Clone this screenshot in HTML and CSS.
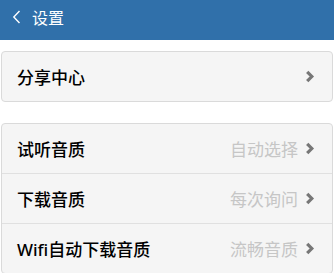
FILE: index.html
```html
<!DOCTYPE html>
<html lang="zh">
<head>
<meta charset="utf-8">
<link rel="stylesheet" href="styles.css">
</head>
<body>
<header class="topbar">
  <span class="back"><svg width="9" height="14" viewBox="0 0 9 14"><path d="M7.5 1 L1.8 7 L7.5 13" fill="none" stroke="#ffffff" stroke-width="1.4"/></svg></span>
  <span class="title">设置</span>
</header>
<main class="content">
  <section class="group">
    <div class="row">
      <span class="label">分享中心</span>
      <span class="chev"><svg width="10" height="13" viewBox="0 0 10 13"><path d="M2.2 1.8 L6.8 6.5 L2.2 11.2" fill="none" stroke="#777777" stroke-width="3.2"/></svg></span>
    </div>
  </section>
  <section class="group">
    <div class="row">
      <span class="label">试听音质</span>
      <span class="value">自动选择</span>
      <span class="chev"><svg width="10" height="13" viewBox="0 0 10 13"><path d="M2.2 1.8 L6.8 6.5 L2.2 11.2" fill="none" stroke="#777777" stroke-width="3.2"/></svg></span>
    </div>
    <div class="row">
      <span class="label">下载音质</span>
      <span class="value">每次询问</span>
      <span class="chev"><svg width="10" height="13" viewBox="0 0 10 13"><path d="M2.2 1.8 L6.8 6.5 L2.2 11.2" fill="none" stroke="#777777" stroke-width="3.2"/></svg></span>
    </div>
    <div class="row">
      <span class="label">Wifi自动下载音质</span>
      <span class="value">流畅音质</span>
      <span class="chev"><svg width="10" height="13" viewBox="0 0 10 13"><path d="M2.2 1.8 L6.8 6.5 L2.2 11.2" fill="none" stroke="#777777" stroke-width="3.2"/></svg></span>
    </div>
  </section>
</main>
</body>
</html>
```

FILE: styles.css
```css
html, body {
  margin: 0;
  padding: 0;
  background: #ffffff;
  font-family: "Liberation Sans", "Noto Sans CJK SC", sans-serif;
}
.topbar {
  height: 40px;
  background: #3070aa;
  color: #ffffff;
  display: flex;
  align-items: center;
  padding: 0 0 6px 12px;
  box-sizing: border-box;
  font-size: 16px;
}
.back {
  display: flex;
  align-items: center;
  margin-right: 11px;
}
.title {
  font-family: "Noto Sans CJK SC", sans-serif;
}
.content {
  padding: 11px 1px 0 1px;
  display: flex;
  flex-direction: column;
  gap: 21px;
}
.group {
  background: #f5f5f5;
  border: 1px solid #dadada;
  border-radius: 4px;
}
.row {
  height: 49px;
  display: flex;
  align-items: center;
  padding: 0 17px 0 15px;
  border-top: 1px solid #e0e0e0;
}
.row:first-child {
  border-top: none;
}
.label {
  flex: 1;
  font-size: 17px;
  font-weight: 500;
  color: #000000;
  font-family: "Noto Sans", "Noto Sans CJK SC", sans-serif;
}
.value {
  font-size: 17px;
  color: #c6c6c6;
  margin-right: 7px;
  font-family: "Noto Sans CJK SC", sans-serif;
}
.chev {
  display: flex;
  align-items: center;
}
```
